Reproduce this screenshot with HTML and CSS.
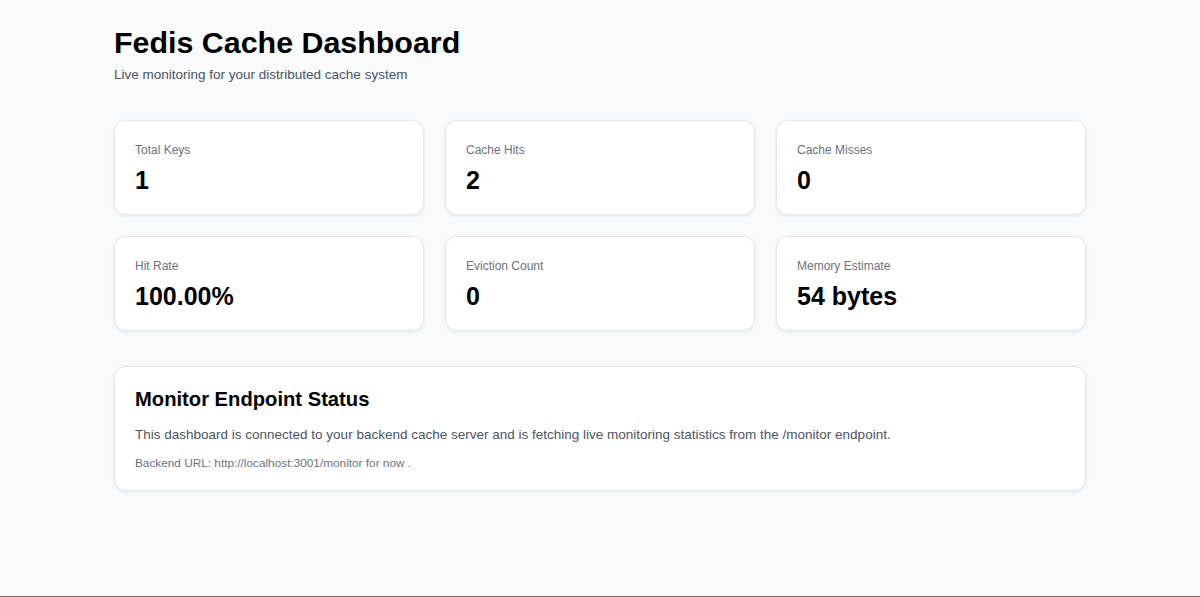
FILE: index.html
```html
<!DOCTYPE html>
<html lang="en">
<head>
<meta charset="utf-8">
<title>Fedis Cache Dashboard</title>
<link rel="stylesheet" href="styles.css">
</head>
<body>
<main class="container">
  <header class="header">
    <h1 class="title">Fedis Cache Dashboard</h1>
    <p class="subtitle">Live monitoring for your distributed cache system</p>
  </header>
  <section class="grid">
    <div class="card"><div class="label">Total Keys</div><div class="value">1</div></div>
    <div class="card"><div class="label">Cache Hits</div><div class="value">2</div></div>
    <div class="card"><div class="label">Cache Misses</div><div class="value">0</div></div>
    <div class="card"><div class="label">Hit Rate</div><div class="value">100.00%</div></div>
    <div class="card"><div class="label">Eviction Count</div><div class="value">0</div></div>
    <div class="card"><div class="label">Memory Estimate</div><div class="value">54 bytes</div></div>
  </section>
  <section class="status">
    <h2 class="status-title">Monitor Endpoint Status</h2>
    <p class="status-text">This dashboard is connected to your backend cache server and is fetching live monitoring statistics from the /monitor endpoint.</p>
    <p class="status-url">Backend URL: http://localhost:3001/monitor for now .</p>
  </section>
</main>
</body>
</html>
```

FILE: styles.css
```css
html, body {
  margin: 0;
  padding: 0;
}
body {
  background: #f9fafb;
  font-family: "Liberation Sans", Arial, sans-serif;
  color: #111;
  min-height: 100vh;
  box-sizing: border-box;
  border-bottom: 1px solid #6b6b6b;
}
.container {
  width: 972px;
  margin: 0 auto;
  padding-top: 24px;
}
.header {
  margin-bottom: 35px;
}
.title {
  margin: 0;
  font-size: 30.4px;
  font-weight: 700;
  line-height: 36px;
  color: #000;
}
.subtitle {
  margin: 5px 0 0;
  font-size: 13.5px;
  line-height: 20px;
  color: #4b5563;
}
.grid {
  display: grid;
  grid-template-columns: repeat(3, 1fr);
  gap: 21px;
}
.card {
  background: #fff;
  border: 1px solid #e5e7eb;
  border-radius: 12px;
  box-shadow: 0 1px 4px rgba(0,0,0,0.09);
  padding: 20px 20px;
  height: 95px;
  box-sizing: border-box;
}
.label {
  font-size: 12px;
  line-height: 18px;
  color: #6b7280;
}
.value {
  margin-top: 6px;
  font-size: 25px;
  line-height: 30px;
  font-weight: 700;
  color: #000;
}
.status {
  margin-top: 35px;
  background: #fff;
  border: 1px solid #e5e7eb;
  border-radius: 12px;
  box-shadow: 0 1px 4px rgba(0,0,0,0.09);
  padding: 18px 20px 20px;
  height: 125px;
  box-sizing: border-box;
}
.status-title {
  margin: 0;
  font-size: 20.2px;
  line-height: 28px;
  font-weight: 700;
  color: #000;
}
.status-text {
  margin: 12px 0 0;
  font-size: 13.5px;
  line-height: 20px;
  color: #4b5563;
}
.status-url {
  margin: 9px 0 0;
  font-size: 11.8px;
  line-height: 18px;
  color: #6b7280;
}
```
